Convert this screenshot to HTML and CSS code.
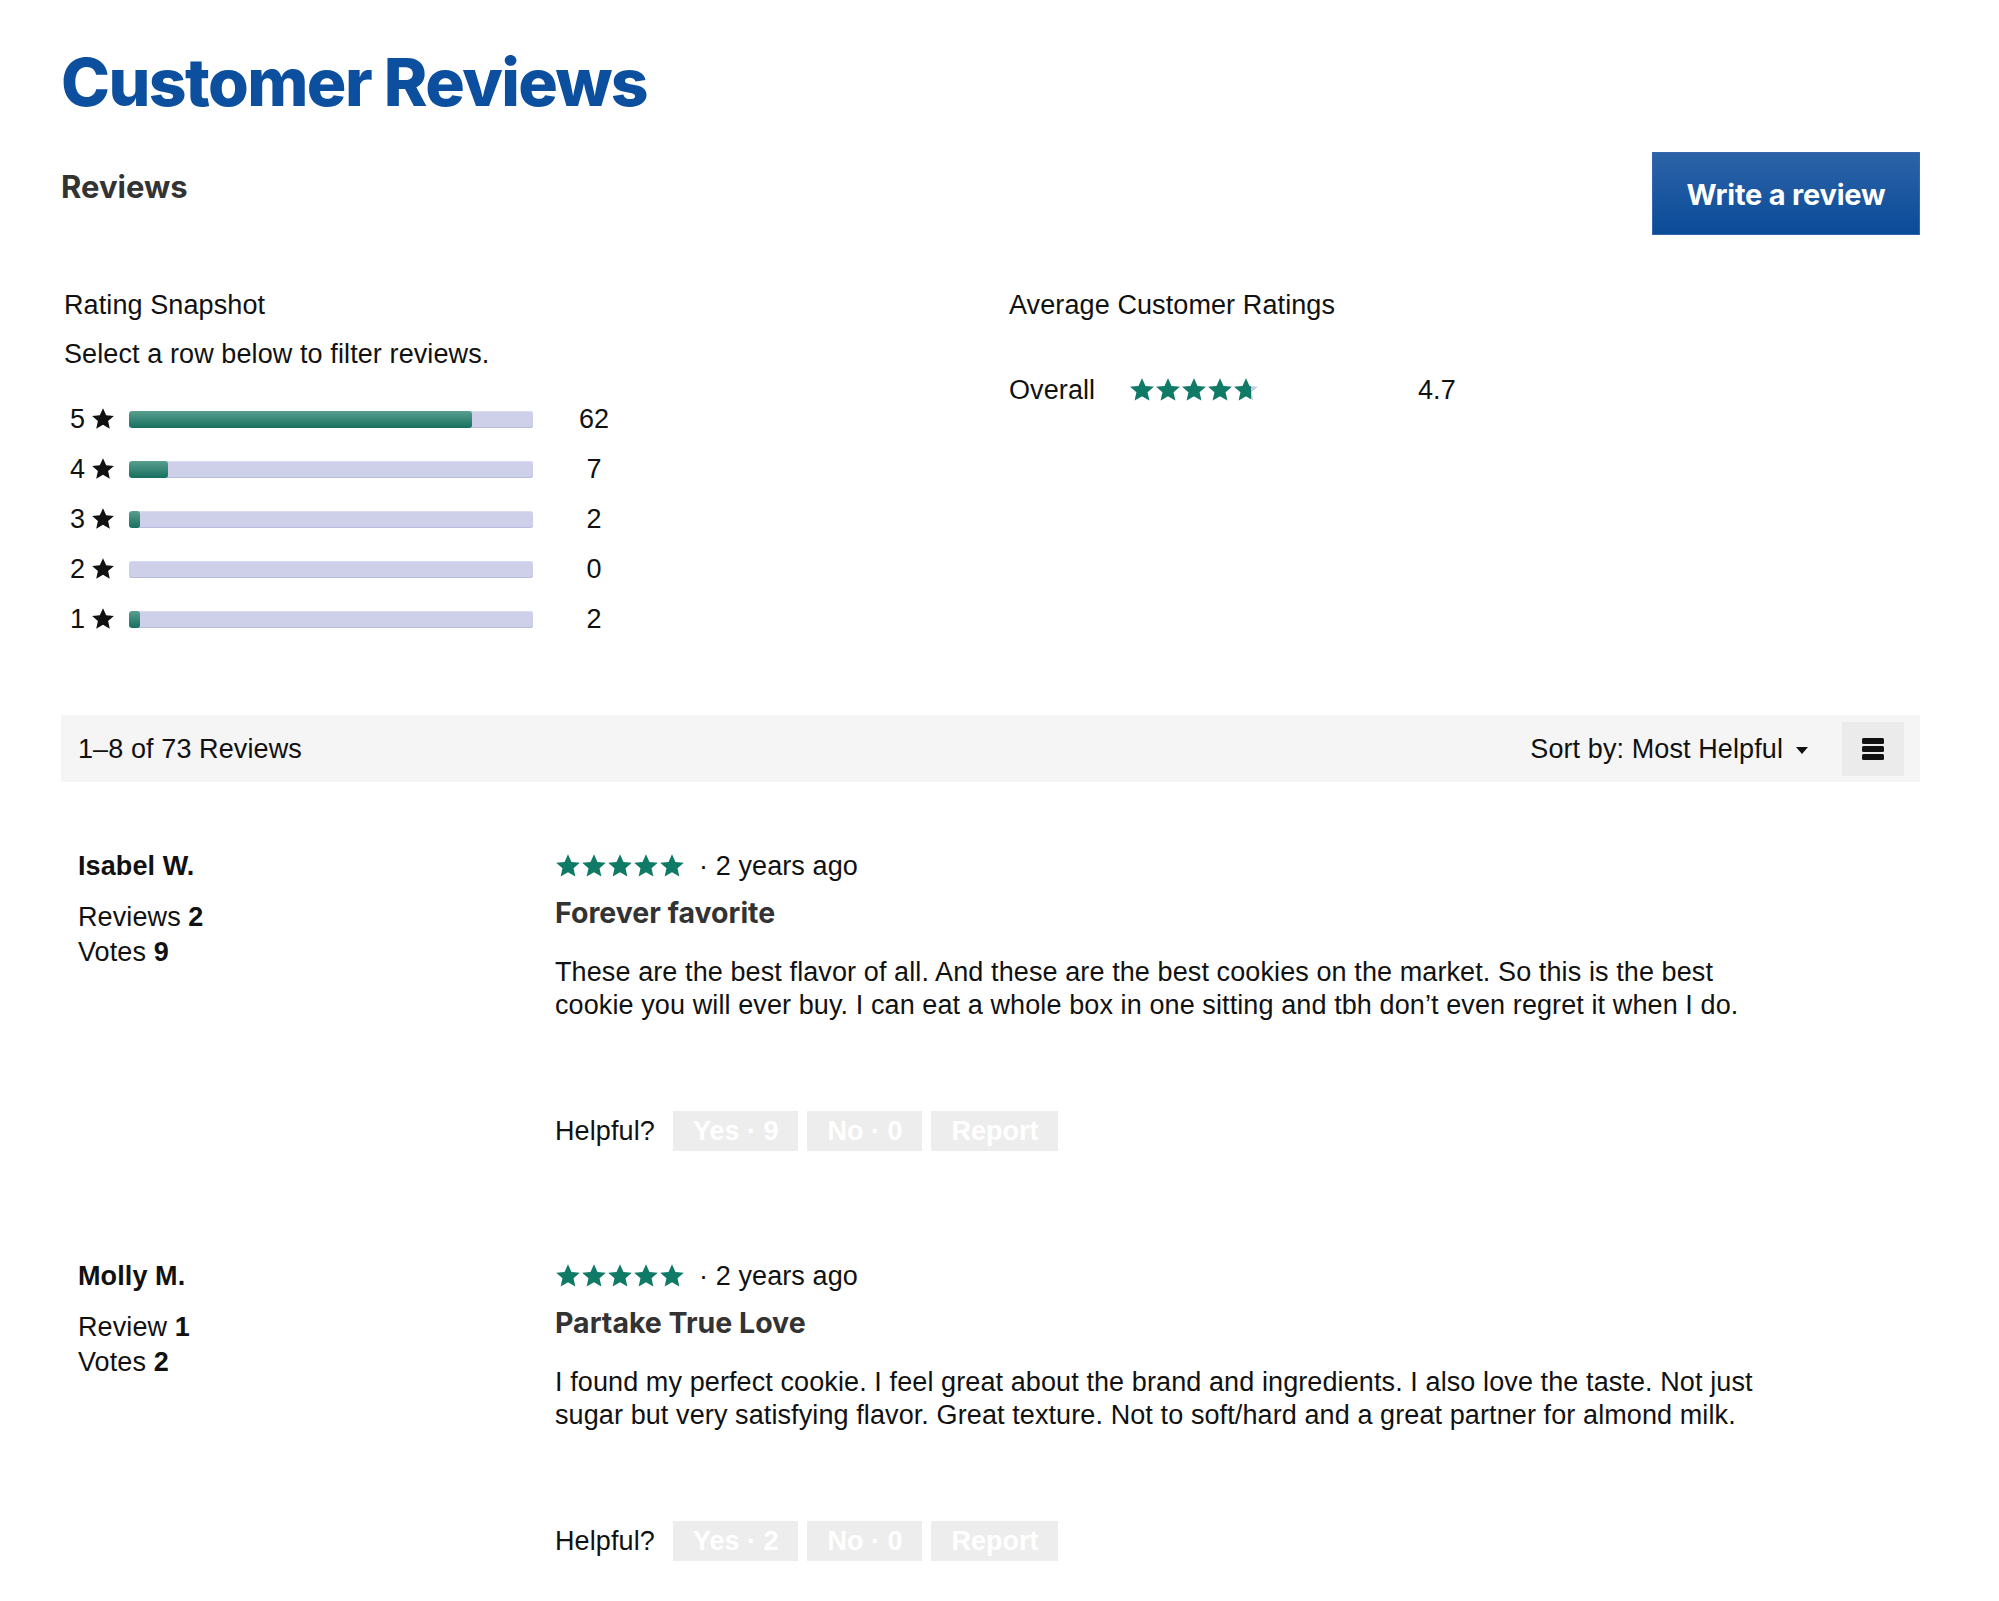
FILE: index.html
```html
<!DOCTYPE html>
<html lang="en">
<head>
<meta charset="utf-8">
<title>Customer Reviews</title>
<link rel="stylesheet" href="styles.css">
</head>
<body>
<svg class="defs" width="0" height="0" aria-hidden="true">
  <defs>
    <symbol id="star" viewBox="0 0 24 24">
      <path d="M12 1.2l3.2 7.1 7.7.7-5.8 5.1 1.7 7.6L12 17.8l-6.8 3.9 1.7-7.6L1.1 9l7.7-.7z"/>
    </symbol>
  </defs>
</svg>
<main class="page">
  <h1 class="title">Customer Reviews</h1>

  <div class="head-row">
    <h2 class="subhead">Reviews</h2>
    <button class="write-btn" type="button">Write a review</button>
  </div>

  <section class="snapshot">
    <div class="snap-col">
      <p class="snap-title">Rating Snapshot</p>
      <p class="snap-hint">Select a row below to filter reviews.</p>
      <ul class="hist">
        <li class="hist-row">
          <span class="hist-num">5</span>
          <svg class="hist-star"><use href="#star"/></svg>
          <span class="hist-track"><span class="hist-fill" style="width:84.9%"></span></span>
          <span class="hist-count">62</span>
        </li>
        <li class="hist-row">
          <span class="hist-num">4</span>
          <svg class="hist-star"><use href="#star"/></svg>
          <span class="hist-track"><span class="hist-fill" style="width:9.6%"></span></span>
          <span class="hist-count">7</span>
        </li>
        <li class="hist-row">
          <span class="hist-num">3</span>
          <svg class="hist-star"><use href="#star"/></svg>
          <span class="hist-track"><span class="hist-fill" style="width:2.74%"></span></span>
          <span class="hist-count">2</span>
        </li>
        <li class="hist-row">
          <span class="hist-num">2</span>
          <svg class="hist-star"><use href="#star"/></svg>
          <span class="hist-track"><span class="hist-fill" style="width:0%"></span></span>
          <span class="hist-count">0</span>
        </li>
        <li class="hist-row">
          <span class="hist-num">1</span>
          <svg class="hist-star"><use href="#star"/></svg>
          <span class="hist-track"><span class="hist-fill" style="width:2.74%"></span></span>
          <span class="hist-count">2</span>
        </li>
      </ul>
    </div>
    <div class="avg-col">
      <p class="snap-title avg-title">Average Customer Ratings</p>
      <div class="overall">
        <span class="overall-label">Overall</span>
        <span class="overall-stars">
          <span class="stars stars-bg">
            <svg class="star"><use href="#star"/></svg><svg class="star"><use href="#star"/></svg><svg class="star"><use href="#star"/></svg><svg class="star"><use href="#star"/></svg><svg class="star"><use href="#star"/></svg>
          </span>
          <span class="stars stars-fg" style="width:94%">
            <svg class="star"><use href="#star"/></svg><svg class="star"><use href="#star"/></svg><svg class="star"><use href="#star"/></svg><svg class="star"><use href="#star"/></svg><svg class="star"><use href="#star"/></svg>
          </span>
        </span>
        <span class="overall-value">4.7</span>
      </div>
    </div>
  </section>

  <div class="toolbar">
    <span class="count">1–8 of 73 Reviews</span>
    <div class="tools">
      <span class="sort">Sort by: Most Helpful</span>
      <span class="caret"></span>
      <span class="menu-btn">
        <span class="bar"></span><span class="bar"></span><span class="bar"></span>
      </span>
    </div>
  </div>

  <article class="review">
    <div class="author">
      <p class="author-name">Isabel W.</p>
      <p class="author-stat">Reviews <b>2</b></p>
      <p class="author-stat">Votes <b>9</b></p>
    </div>
    <div class="review-main">
      <div class="review-meta">
        <span class="stars">
          <svg class="star"><use href="#star"/></svg><svg class="star"><use href="#star"/></svg><svg class="star"><use href="#star"/></svg><svg class="star"><use href="#star"/></svg><svg class="star"><use href="#star"/></svg>
        </span>
        <span class="ago">· 2 years ago</span>
      </div>
      <h3 class="review-title">Forever favorite</h3>
      <p class="review-body">These are the best flavor of all. And these are the best cookies on the market. So this is the best cookie you will ever buy. I can eat a whole box in one sitting and tbh don’t even regret it when I do.</p>
      <div class="helpful">
        <span class="helpful-label">Helpful?</span>
        <span class="vote">Yes · 9</span>
        <span class="vote">No · 0</span>
        <span class="vote">Report</span>
      </div>
    </div>
  </article>

  <article class="review">
    <div class="author">
      <p class="author-name">Molly M.</p>
      <p class="author-stat">Review <b>1</b></p>
      <p class="author-stat">Votes <b>2</b></p>
    </div>
    <div class="review-main">
      <div class="review-meta">
        <span class="stars">
          <svg class="star"><use href="#star"/></svg><svg class="star"><use href="#star"/></svg><svg class="star"><use href="#star"/></svg><svg class="star"><use href="#star"/></svg><svg class="star"><use href="#star"/></svg>
        </span>
        <span class="ago">· 2 years ago</span>
      </div>
      <h3 class="review-title">Partake True Love</h3>
      <p class="review-body">I found my perfect cookie. I feel great about the brand and ingredients. I also love the taste. Not just sugar but very satisfying flavor. Great texture. Not to soft/hard and a great partner for almond milk.</p>
      <div class="helpful">
        <span class="helpful-label">Helpful?</span>
        <span class="vote">Yes · 2</span>
        <span class="vote">No · 0</span>
        <span class="vote">Report</span>
      </div>
    </div>
  </article>
</main>
</body>
</html>
```

FILE: styles.css
```css
* { box-sizing: border-box; }

html, body {
  margin: 0;
  background: #fff;
}

body {
  color: #111;
  font-family: "Liberation Sans", Arial, Helvetica, sans-serif;
  font-size: 27px;
  line-height: 36px;
  letter-spacing: 0.1px;
}

.defs {
  position: absolute;
  width: 0;
  height: 0;
  overflow: hidden;
}

.page {
  padding: 0 79px 40px 61px;
}

/* Heading */
.title {
  margin: 42px 0 0;
  font-family: Inter, "Open Sans", sans-serif;
  font-weight: 800;
  font-size: 66px;
  line-height: 81px;
  letter-spacing: -1.6px;
  color: #0b4f9e;
}

.head-row {
  display: flex;
  justify-content: space-between;
  align-items: flex-start;
  margin-top: 29px;
}

.subhead {
  margin: 17px 0 0;
  font-family: Inter, "Open Sans", sans-serif;
  font-weight: 700;
  font-size: 31px;
  line-height: 36px;
  letter-spacing: 0;
  color: #333;
}

.write-btn {
  width: 268px;
  height: 83px;
  padding: 2px 0 0;
  border: 1px solid #3468ac;
  border-radius: 0;
  background: linear-gradient(#2c63a8, #0a4b98);
  color: #fff;
  font-family: Inter, "Open Sans", sans-serif;
  font-weight: 700;
  font-size: 29px;
  letter-spacing: -0.2px;
  line-height: 36px;
}

/* Snapshot */
.snapshot {
  display: grid;
  grid-template-columns: 948px 1fr;
  margin-top: 52px;
}

.snap-title,
.snap-hint {
  margin: 0;
  padding-left: 3px;
  line-height: 36px;
  color: #111;
}

.avg-title {
  padding-left: 0;
}

.snap-hint {
  margin-top: 13px;
}

.hist {
  list-style: none;
  margin: 22px 0 0;
  padding: 0;
}

.hist-row {
  display: flex;
  align-items: center;
  height: 50px;
  padding-left: 9px;
}

.hist-num {
  width: 15px;
  color: #111;
}

.hist-star {
  width: 24px;
  height: 24px;
  margin-left: 6px;
  fill: #111;
}

.hist-track {
  position: relative;
  width: 404px;
  height: 17px;
  margin-left: 14px;
  border-radius: 3px;
  background: #cdd0e8;
  box-shadow: inset 0 -1px 0 #b8bcdc, inset 0 1px 0 #d9dcef;
  overflow: hidden;
}

.hist-fill {
  display: block;
  height: 100%;
  border-radius: 3px;
  background: linear-gradient(#5a9e8f, #16705f);
}

.hist-count {
  width: 60px;
  margin-left: 31px;
  text-align: center;
  color: #111;
}

.overall {
  display: flex;
  align-items: center;
  margin-top: 49px;
  height: 36px;
}

.overall-label {
  width: 120px;
}

.overall-stars {
  position: relative;
  width: 130px;
  height: 26px;
  margin-right: 159px;
}

.stars {
  display: inline-flex;
  white-space: nowrap;
}

.star {
  flex: none;
  width: 26px;
  height: 26px;
  fill: #0f7a66;
}

.overall-stars .stars {
  position: absolute;
  left: 0;
  top: 0;
  overflow: hidden;
}

.stars-bg {
  width: 130px;
}

.stars-bg .star {
  fill: #c9cce6;
}

/* Toolbar */
.toolbar {
  display: flex;
  align-items: center;
  justify-content: space-between;
  height: 67px;
  margin-top: 71px;
  padding: 0 16px 0 17px;
  background: #f5f5f5;
}

.tools {
  display: flex;
  align-items: center;
}

.caret {
  width: 0;
  height: 0;
  margin-left: 13px;
  margin-top: 4px;
  border-left: 6px solid transparent;
  border-right: 6px solid transparent;
  border-top: 7px solid #111;
}

.menu-btn {
  display: flex;
  flex-direction: column;
  align-items: center;
  justify-content: center;
  gap: 2px;
  width: 62px;
  height: 54px;
  margin-left: 34px;
  background: #ebebeb;
}

.menu-btn .bar {
  width: 22px;
  height: 6px;
  border-radius: 1.5px;
  background: #111;
}

/* Reviews */
.review {
  display: grid;
  grid-template-columns: 494px 1fr;
  margin-top: 66px;
}

.review + .review {
  margin-top: 107px;
}

.author {
  padding-left: 17px;
}

.author p {
  margin: 0;
  color: #111;
}

.author-name {
  font-weight: 700;
  line-height: 36px;
}

.author-stat {
  line-height: 35px;
}

.author-name + .author-stat {
  margin-top: 16px;
}

.author-stat b {
  font-weight: 700;
}

.review-meta {
  display: flex;
  align-items: center;
  height: 36px;
}

.review-meta .stars {
  width: 130px;
}

.ago {
  margin-left: 14px;
  color: #111;
}

.review-title {
  margin: 11px 0 0;
  font-family: Inter, "Open Sans", sans-serif;
  font-weight: 700;
  font-size: 28.5px;
  line-height: 36px;
  letter-spacing: 0;
  color: #333;
}

.review-body {
  max-width: 1230px;
  margin: 25px 0 0;
  line-height: 33px;
  color: #111;
}

.helpful {
  display: flex;
  align-items: center;
  height: 40px;
  margin-top: 89px;
}

.helpful-label {
  margin-right: 18px;
  color: #111;
}

.vote {
  display: flex;
  align-items: center;
  height: 40px;
  padding: 0 20px;
  margin-right: 9px;
  background: #ededed;
  color: #fff;
  font-weight: 700;
  letter-spacing: 0;
}
```
